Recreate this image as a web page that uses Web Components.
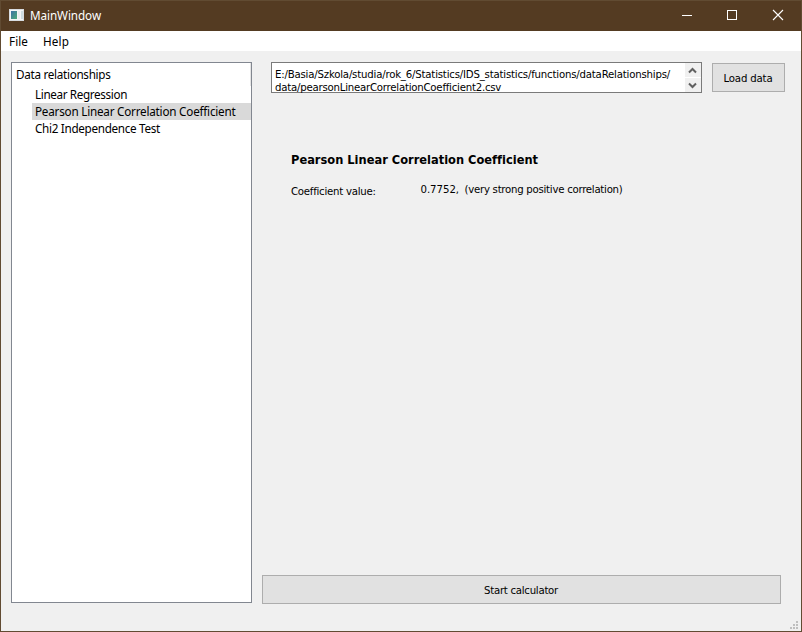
<!DOCTYPE html>
<html lang="en">
<head>
<meta charset="utf-8">
<title>MainWindow</title>
<style>
html,body{margin:0;height:100%;overflow:hidden}
body{color:#000;--ui:"Noto Sans","Open Sans",sans-serif;--dlg:"DejaVu Sans Condensed","DejaVu Sans",sans-serif}
</style>
</head>
<body>
<app-window></app-window>
<script>
const define = (name, html, ready) => {
  const template = document.createElement('template');
  template.innerHTML = html;
  customElements.define(name, class extends HTMLElement {
    connectedCallback() {
      if (this.shadowRoot) return;
      this.attachShadow({mode: 'open'}).append(template.content.cloneNode(true));
      if (ready) ready(this);
    }
  });
};

// A single line of text whose tracking is set so that it fills the width in "w".
define('ui-text', `<style>
:host{display:block;white-space:pre;font:11.7px/17px var(--ui);flex:none}
:host([dlg]){font:11.3px/14px var(--dlg)}
:host([heading]){font:bold 12.7px/16px var(--dlg)}
span{display:inline-block}
</style><span><slot></slot></span>`, el => {
  const span = el.shadowRoot.querySelector('span');
  const w = +el.getAttribute('w');
  const n = el.textContent.length;
  const gap = (w - span.getBoundingClientRect().width) / n;
  span.style.letterSpacing = gap.toFixed(3) + 'px';
});

define('title-bar', `<style>
:host{display:flex;align-items:center;height:30px;background:#543b22;color:#fff;padding-left:8px;box-sizing:border-box}
ui-text{margin:-2px auto 0 6px}
.app{width:15px;height:12px;margin-top:-2px}
.btn{width:46px;height:30px;flex:none}
</style>
<svg class="app" viewBox="0 0 15 12"><defs><linearGradient id="g" x1="0" y1="0" x2="1" y2="1"><stop offset="0" stop-color="#3e71a6"/><stop offset="1" stop-color="#4dab77"/></linearGradient></defs><rect width="15" height="12" fill="#d8dce0"/><rect x="1" y="1" width="13" height="10" fill="#f4f5f6"/><rect x="2" y="2" width="6" height="8" fill="url(#g)"/><rect x="9" y="2" width="2" height="8" fill="#ececee"/><rect x="12" y="2" width="2" height="8" fill="#cfdce0"/></svg>
<ui-text w="71">MainWindow</ui-text>
<svg class="btn" viewBox="0 0 46 30"><path d="M19 14.5h10" stroke="#fff"/></svg>
<svg class="btn" viewBox="0 0 46 30"><rect x="18.500" y="9.500" width="9" height="9" fill="none" stroke="#fff"/></svg>
<svg class="btn" viewBox="0 0 46 30"><path d="M18 9l10 10M28 9L18 19" stroke="#fff" stroke-width="1.100"/></svg>`);

define('menu-bar', `<style>
:host{display:flex;gap:15px;height:20px;background:#fff;padding:2px 8px 0;box-sizing:border-box}
</style><ui-text w="19">File</ui-text><ui-text w="26">Help</ui-text>`);

define('tree-item', `<style>
:host{display:block;height:17px;margin-left:20px;padding-left:3px}
:host([selected]){background:#d9d9d9}
:host([root]){margin:0;height:23px;padding:3px 0 0 4px;box-sizing:border-box;border-right:1px solid #e5e5e5}
</style><slot></slot>`);

define('tree-view', `<style>
:host{display:block;box-sizing:border-box;background:#fff;border:1px solid #828790}
</style><slot></slot>`);

define('push-button', `<style>
:host{display:flex;align-items:center;justify-content:center;box-sizing:border-box;height:29px;background:#e1e1e1;border:1px solid #adadad;padding:3px 1px 0 0}
</style><slot></slot>`);

define('path-box', `<style>
:host{display:flex;box-sizing:border-box;width:431px;height:31px;background:#fff;border:1px solid #7a7a7a}
.lines{flex:1;min-width:0;padding:5px 0 0 3px}
.lines ui-text{height:13px}
.lines ui-text+ui-text{height:11px}
.spin{width:16px;display:grid;grid-template-rows:14px 14px;gap:1px}
svg{width:16px;height:14px;background:#f0f0f0}
path{fill:none;stroke:#606060;stroke-width:2}
</style>
<div class="lines"><ui-text dlg w="395">E:/Basia/Szkola/studia/rok_6/Statistics/IDS_statistics/functions/dataRelationships/</ui-text><ui-text dlg w="226">data/pearsonLinearCorrelationCoefficient2.csv</ui-text></div>
<div class="spin"><svg viewBox="0 0 16 14"><path d="M4 9.500L7.500 6L11 9.500"/></svg><svg viewBox="0 0 16 14"><path d="M4 5.500L7.500 9L11 5.500"/></svg></div>`);

define('result-panel', `<style>
:host{display:block;padding:59px 0 0 29px}
.row{display:flex;padding-top:15px}
.row>:first-child{width:129.500px;padding-top:2px}
.row>:nth-child(2){width:44px}
</style>
<ui-text heading w="246">Pearson Linear Correlation Coefficient</ui-text>
<div class="row"><ui-text dlg w="84.500">Coefficient value:</ui-text><ui-text dlg w="38.500">0.7752,</ui-text><ui-text dlg w="158">(very strong positive correlation)</ui-text></div>`);

define('size-grip', `<style>
:host{display:block;position:absolute;right:3px;bottom:2px;width:8px;height:8px}
svg{display:block}
</style><svg width="8" height="8" fill="#bfbfbf"><path d="M6 0h2v2h-2zM3 3h2v2h-2zM6 3h2v2h-2zM0 6h2v2h-2zM3 6h2v2h-2zM6 6h2v2h-2z"/></svg>`);

define('app-window', `<style>
:host{display:flex;flex-direction:column;position:relative;width:802px;height:632px;box-sizing:border-box;border:1px solid #614b32;background:#f0f0f0}
main{flex:1;display:grid;grid-template-columns:241px 519px;column-gap:10px;padding:11px 0 27px 10px}
tree-view{height:541px}
section{display:flex;flex-direction:column}
.top{display:flex;gap:10px;margin:0 -4px 0 9px}
.top push-button{width:73px;margin-top:1px}
.run{margin-top:auto}
</style>
<title-bar></title-bar>
<menu-bar></menu-bar>
<main>
<tree-view>
<tree-item root><ui-text w="94.500">Data relationships</ui-text></tree-item>
<tree-item><ui-text w="92">Linear Regression</ui-text></tree-item>
<tree-item selected><ui-text w="200.500">Pearson Linear Correlation Coefficient</ui-text></tree-item>
<tree-item><ui-text w="125">Chi2 Independence Test</ui-text></tree-item>
</tree-view>
<section>
<div class="top"><path-box></path-box><push-button><ui-text dlg w="49">Load data</ui-text></push-button></div>
<result-panel></result-panel>
<push-button class="run"><ui-text dlg w="74">Start calculator</ui-text></push-button>
</section>
</main>
<size-grip></size-grip>`);
</script>
</body>
</html>
